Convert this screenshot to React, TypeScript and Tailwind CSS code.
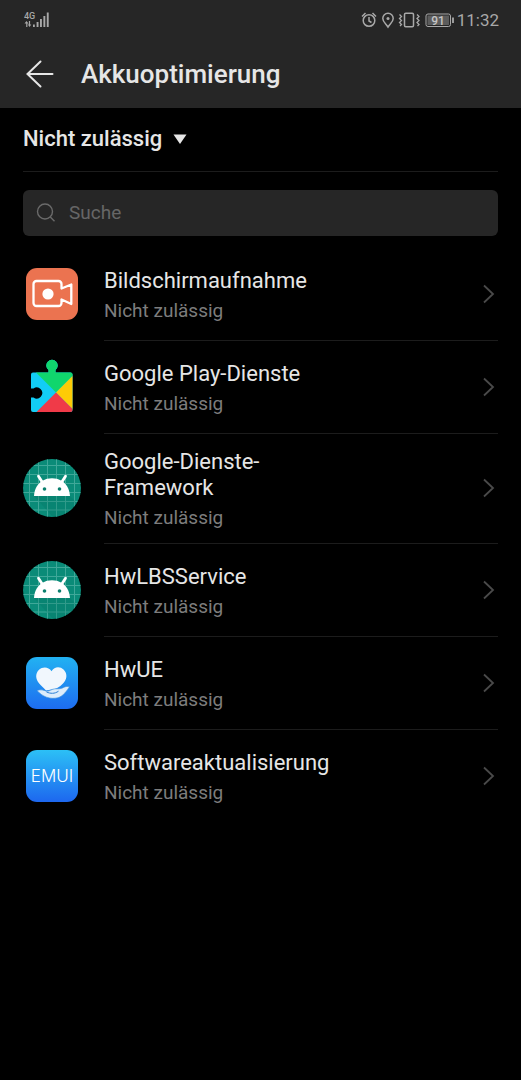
import type { ReactNode } from 'react';

type AppEntry = {
  id: string;
  name: string;
  icon: ReactNode;
};

function StatusBar() {
  return (
    <div className="flex h-10 items-center justify-between pr-[22px] pl-6 text-[#a8a8a8]">
      <svg width="26" height="18" viewBox="0 0 26 18" fill="currentColor" aria-label="4G">
        <text x="0" y="8" fontSize="9" fontWeight="500">4G</text>
        <path d="M2.5 10l2 2.5H3.4V16H2.2v-3.5H.5zM5.5 16l-1.6-2.5h1V10h1.2v3.5h1.2z" />
        <path d="M9 13.5h1.8V16H9zM12.6 11h1.9v5h-1.9zM16 8h1.9v8H16zM19.4 5h1.9v11h-1.9zM22.8 1.5h1.9V16h-1.9z" />
      </svg>
      <div className="flex items-center gap-0.5">
        <svg width="94" height="18" viewBox="0 0 94 18" fill="none" stroke="currentColor" strokeWidth="1.5">
          <circle cx="8" cy="9.5" r="5.8" />
          <path d="M8 6v4l2.5 1.5M1 5.5L4.500 2M15 5.500L11.500 2" />
          <path d="M27 2.200a5.200 5.200 0 0 0-5.200 5.200c0 3.500 3.200 5.300 5.200 8.600 2-3.300 5.200-5.100 5.200-8.600A5.200 5.200 0 0 0 27 2.200z" />
          <circle cx="27" cy="7.5" r="1.5" fill="currentColor" stroke="none" />
          <rect x="43.5" y="2.2" width="9" height="13.6" rx="1.2" />
          <path d="M38.500 3.500l2 2-2 2 2 2-2 2 2 2-1.500 1.500M56 3.500l2 2-2 2 2 2-2 2 2 2-1.500 1.500" strokeWidth="1.3" />
          <rect x="65" y="3" width="24.5" height="12.5" rx="2" strokeWidth="1" />
          <rect x="66.5" y="4.5" width="21.5" height="9.5" fill="#5c5c5c" stroke="none" />
          <path d="M92 6.500v5.500" strokeWidth="1.8" />
          <text x="77" y="13.5" fontSize="12" fontWeight="500" textAnchor="middle" fill="#c4c4c4" stroke="none">91</text>
        </svg>
        <span className="text-[17px] leading-5">11:32</span>
      </div>
    </div>
  );
}

function RecorderIcon() {
  return (
    <svg width="58" height="58" viewBox="0 0 58 58" fill="none">
      <rect x="3" y="3" width="52" height="52" rx="11" fill="#eb7350" />
      <path
        d="M13.500 16h22a3 3 0 0 1 3 3v4.500l9.800-4v19.500l-9.800-4.500v3.500a3 3 0 0 1-3 3H13.500a3 3 0 0 1-3-3V19a3 3 0 0 1 3-3z"
        stroke="#ffffff"
        strokeWidth="2.3"
        strokeLinejoin="round"
      />
      <circle cx="25" cy="29" r="5.6" fill="#ffffff" />
    </svg>
  );
}

function PlayServicesIcon() {
  return (
    <svg width="58" height="58" viewBox="0 0 58 58">
      <defs>
        <clipPath id="puzzle">
          <path d="M10 14.500h15.500v-2.500a5.700 5.700 0 1 1 7 0v2.500H47.500a2 2 0 0 1 2 2v35.500a2 2 0 0 1-2 2H10a2 2 0 0 1-2-2V39.500h2.500a5.500 5.500 0 1 0 0-9H8V16.500a2 2 0 0 1 2-2z" />
        </clipPath>
      </defs>
      <g clipPath="url(#puzzle)">
        <rect width="58" height="58" fill="#12cdf5" />
        <path d="M13 14.500V0H64v3.500L33 34.500z" fill="#10d66d" />
        <path d="M33 34.500L58 9.500v50z" fill="#fecb06" />
        <path d="M33 34.500L60 61.500V64H3.500z" fill="#f03a48" />
      </g>
    </svg>
  );
}

function AndroidIcon() {
  return (
    <svg width="58" height="58" viewBox="0 0 58 58">
      <defs>
        <clipPath id="disc">
          <circle cx="29" cy="29" r="29" />
        </clipPath>
      </defs>
      <g clipPath="url(#disc)">
        <rect width="58" height="58" fill="#0a8b78" />
        <path
          d="M6.500 0v58M15.500 0v58M24.500 0v58M33.500 0v58M42.500 0v58M51.500 0v58M0 6.500h58M0 15.500h58M0 24.500h58M0 33.500h58M0 42.500h58M0 51h58"
          stroke="#3fa899"
          strokeWidth="1"
        />
        <path d="M47 37l11 11v10H30L11 37z" fill="#04705f" opacity="0.25" />
      </g>
      <path d="M11 37C11.500 29.500 15 24.500 19.500 21.800c5.500-3.300 13.500-3.300 19 0C43 24.500 46.500 29.500 47 37z" fill="#ffffff" />
      <path d="M19.500 23.500L15.500 17.200M38.500 23.500l4-6.300" stroke="#ffffff" strokeWidth="2.8" strokeLinecap="round" />
      <circle cx="21.5" cy="30" r="1.8" fill="#0a7f6e" />
      <circle cx="36.5" cy="30" r="1.8" fill="#0a7f6e" />
    </svg>
  );
}

function HeartHandIcon() {
  return (
    <svg width="58" height="58" viewBox="0 0 58 58">
      <defs>
        <linearGradient id="heartBg" x1="0" y1="0" x2="0" y2="1">
          <stop offset="0" stopColor="#22b2f2" />
          <stop offset="1" stopColor="#1d6cf0" />
        </linearGradient>
      </defs>
      <rect x="3" y="3" width="52" height="52" rx="11" fill="url(#heartBg)" />
      <path
        d="M28.500 17.200C25.500 12.500 19.500 12.500 16 15.800c-4 3.900-3.500 9.500.2 13.700 2 2.300 4.800 4.400 6.800 7l5.500-1c4.500-.5 8-2 11.500-6 4-4 4.800-9.500.8-13.700-3.800-3.600-9.300-3.300-12.300 1.400z"
        fill="#f1f7fd"
      />
      <path
        d="M14 36.500c3.500-1.300 6.500-.5 9.500.8 3 .2 5.500-2.500 8.500-2.500 3 0 6 .3 8.500-1.300 2-1.200 4-1.200 6-.8-2.500 4-6.500 9.500-11.500 11-8 2-15.500-1-21-7.200z"
        fill="#dcecfb"
        stroke="#3a8fda"
        strokeWidth="0.6"
      />
      <path d="M23.500 38c4 1.700 8 2 12-.8" stroke="#2f82d6" strokeWidth="1" fill="none" />
    </svg>
  );
}

function EmuiIcon() {
  return (
    <svg width="58" height="58" viewBox="0 0 58 58">
      <defs>
        <linearGradient id="emuiBg" x1="0" y1="0" x2="0" y2="1">
          <stop offset="0" stopColor="#2cc0f6" />
          <stop offset="1" stopColor="#1d67ef" />
        </linearGradient>
      </defs>
      <rect x="3" y="3" width="52" height="52" rx="11" fill="url(#emuiBg)" />
      <text x="29" y="35" fontSize="17" fontWeight="300" textAnchor="middle" fill="#ffffff" className="font-['Inter',sans-serif]">
        EMUI
      </text>
    </svg>
  );
}

const apps: AppEntry[] = [
  { id: 'recorder', name: 'Bildschirmaufnahme', icon: <RecorderIcon /> },
  { id: 'play', name: 'Google Play-Dienste', icon: <PlayServicesIcon /> },
  { id: 'gsf', name: 'Google-Dienste-Framework', icon: <AndroidIcon /> },
  { id: 'lbs', name: 'HwLBSService', icon: <AndroidIcon /> },
  { id: 'hwue', name: 'HwUE', icon: <HeartHandIcon /> },
  { id: 'update', name: 'Softwareaktualisierung', icon: <EmuiIcon /> },
];

function AppRow({ app, last }: { app: AppEntry; last: boolean }) {
  return (
    <li>
      <button type="button" className="flex w-full items-stretch gap-[23px] text-left">
        <span className="flex w-[58px] shrink-0 items-center pb-0.5">{app.icon}</span>
        <span
          className={`flex min-h-[93px] flex-1 items-center justify-between border-b pt-3 pb-[13px] ${
            last ? 'border-transparent' : 'border-[#1c1c1c]'
          }`}
        >
          <span className="flex max-w-60 flex-col gap-[5px] pt-[3px]">
            <span className="text-[22px] leading-[26px] text-[#e6e6e6]">{app.name}</span>
            <span className="text-[19px] leading-6 text-[#7d7d7d]">Nicht zulässig</span>
          </span>
          <svg width="18" height="20" viewBox="0 0 18 20" fill="none" stroke="#4a4a4a" strokeWidth="1.8">
            <path d="M4 1.500L13 10l-9 8.500" />
          </svg>
        </span>
      </button>
    </li>
  );
}

export default function App() {
  return (
    <div className="min-h-screen bg-black font-['Roboto',sans-serif] text-[#e6e6e6]">
      <header className="bg-[#262626]">
        <StatusBar />
        <div className="flex h-[68px] items-center gap-[27px] px-[26px]">
          <button type="button" aria-label="Zurück">
            <svg width="28" height="28" viewBox="0 0 28 28" fill="none" stroke="#e6e6e6" strokeWidth="2" strokeLinecap="round">
              <path d="M1.500 14h25M14.500 1.500L1.500 14l13 12.500" />
            </svg>
          </button>
          <h1 className="text-[26px] leading-8 font-medium">Akkuoptimierung</h1>
        </div>
      </header>

      <main className="px-[23px]">
        <div className="flex h-16 items-center border-b border-[#1c1c1c] pb-0.5">
          <label className="flex items-center gap-2.5">
            <select
              aria-label="Filter"
              className="appearance-none bg-black text-[22px] leading-7 font-medium text-[#e6e6e6] outline-none"
            >
              <option>Nicht zulässig</option>
            </select>
            <svg width="14" height="10" viewBox="0 0 14 10" fill="#e6e6e6">
              <path d="M0.500 0.500h13L7 10z" />
            </svg>
          </label>
        </div>

        <label className="mt-[18px] flex h-[46px] items-center gap-3 rounded-md bg-[#262626] px-[13px]">
          <svg width="21" height="20" viewBox="0 0 21 20" fill="none" stroke="#6a6a6a" strokeWidth="1.4">
            <circle cx="9" cy="8.5" r="7.5" />
            <path d="M14.300 14l4.200 4.200" />
          </svg>
          <input
            type="text"
            aria-label="Suche"
            placeholder="Suche"
            className="min-w-0 flex-1 bg-transparent text-[19px] leading-6 outline-none placeholder:text-[#666666]"
          />
        </label>

        <ul className="mt-3">
          {apps.map((app, i) => (
            <AppRow key={app.id} app={app} last={i === apps.length - 1} />
          ))}
        </ul>
      </main>
    </div>
  );
}
